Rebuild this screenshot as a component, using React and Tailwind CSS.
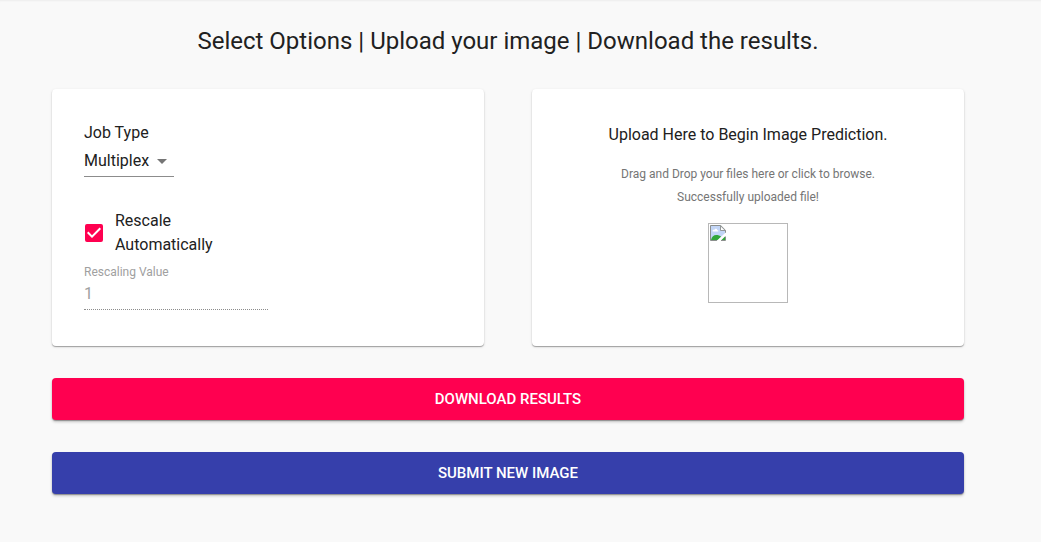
import { useState } from "react";

const card =
  "rounded bg-white shadow-[0_1px_1px_rgba(0,0,0,0.3),0_1px_3px_rgba(0,0,0,0.12)]";

const actionButton =
  "h-[42px] w-full rounded text-[15px] font-medium uppercase text-white shadow-[0_1px_1px_rgba(0,0,0,0.3),0_2px_3px_rgba(0,0,0,0.2)]";

function ImagePlaceholder() {
  return (
    <div
      role="img"
      aria-label="Uploaded file preview"
      className="size-20 border border-[#b8b8b8] p-px"
    >
      <svg className="size-4" viewBox="0 0 16 16" aria-hidden="true">
        <path d="M.5.5h10.2l4.800 4.800v3.700l-6.500 6.500H.5z" fill="#c2d5f6" />
        <path d="M2.500 6.200c0-1.300 1.300-1.700 1.800-1.100.5-1.800 2.700-1.600 3 .1.900-.2 1.300.6.900 1.300H2.900z" fill="#fff" />
        <path d="M1 15c.8-3 2.700-4.900 5.200-4.900 2 0 3.800.6 5 1.600L8.500 15z" fill="#31a73a" />
        <path d="M15.500 8.700V5.300L10.700.5H.5v15h7" fill="none" stroke="#8b8f8d" />
        <path d="M10.500.8v4.700h4.800z" fill="#fff" stroke="#8b8f8d" strokeWidth="0.900" />
        <path d="M16.500 8.300l-9 8.200" stroke="#fff" strokeWidth="2.200" />
        <path d="M11.500 15l3.500-3.500V15z" fill="#31a73a" />
        <path d="M15.500 11.500v4H11" fill="none" stroke="#8b8f8d" />
      </svg>
    </div>
  );
}

export default function App() {
  const [rescale, setRescale] = useState(true);
  const [value, setValue] = useState("1");

  return (
    <div className="min-h-screen bg-[#f9f9f9] pr-[77px] pl-[52px] font-[Roboto,sans-serif] text-base text-[#212121] shadow-[inset_0_2px_2px_-1px_rgba(0,0,0,0.05)]">
      <main className="flex flex-col gap-8 pt-[25px] pb-12">
        <h1 className="text-center text-2xl leading-8">
          Select Options | Upload your image | Download the results.
        </h1>

        <div className="grid grid-cols-2 gap-12">
          <section className={`${card} flex flex-col items-start px-8 pt-8 pb-9`}>
            <label htmlFor="job-type" className="leading-6">
              Job Type
            </label>
            <div className="relative">
              <select
                id="job-type"
                className="h-8 w-[90px] appearance-none border-b border-[#8c8c8c] bg-transparent pr-6 outline-none"
              >
                <option>Multiplex</option>
              </select>
              <svg
                className="pointer-events-none absolute top-1 right-0 size-6 fill-[#757575]"
                viewBox="0 0 24 24"
                aria-hidden="true"
              >
                <path d="M7 10l5 5 5-5z" />
              </svg>
            </div>

            <label className="mt-8 flex w-[150px] items-center gap-[9px] leading-6">
              <span className="relative -ml-0.5 size-6 shrink-0">
                <input
                  type="checkbox"
                  checked={rescale}
                  onChange={(e) => setRescale(e.target.checked)}
                  className="m-[3px] block size-[18px] appearance-none rounded-xs border-2 border-[#757575] checked:border-[#ff0050] checked:bg-[#ff0050]"
                />
                {rescale && (
                  <svg
                    className="pointer-events-none absolute inset-0 fill-white"
                    viewBox="0 0 24 24"
                    aria-hidden="true"
                  >
                    <path d="M10 17l-5-5 1.410-1.410L10 14.170l7.590-7.590L19 8l-9 9z" />
                  </svg>
                )}
              </span>
              <span>Rescale Automatically</span>
            </label>

            <label htmlFor="rescaling-value" className="mt-[7px] text-xs leading-4 text-[#a0a0a0]">
              Rescaling Value
            </label>
            <input
              id="rescaling-value"
              type="text"
              value={value}
              disabled={rescale}
              onChange={(e) => setValue(e.target.value)}
              className="h-[30px] w-[184px] border-b border-dotted border-[#8c8c8c] bg-transparent pb-0.5 text-[#a0a0a0] outline-none"
            />
          </section>

          <section className={`${card} p-8`}>
            <label className="flex cursor-pointer flex-col items-center text-center">
              <span className="leading-7">Upload Here to Begin Image Prediction.</span>
              <span className="mt-3.5 text-xs leading-[23px] text-[#757575]">
                Drag and Drop your files here or click to browse.
              </span>
              <span className="mb-3.5 text-xs leading-[23px] text-[#757575]">
                Successfully uploaded file!
              </span>
              <ImagePlaceholder />
              <input type="file" accept="image/*" className="sr-only" />
            </label>
          </section>
        </div>

        <button type="button" className={`${actionButton} bg-[#ff0050]`}>
          Download Results
        </button>
        <button type="button" className={`${actionButton} bg-[#363fab]`}>
          Submit New Image
        </button>
      </main>
    </div>
  );
}
